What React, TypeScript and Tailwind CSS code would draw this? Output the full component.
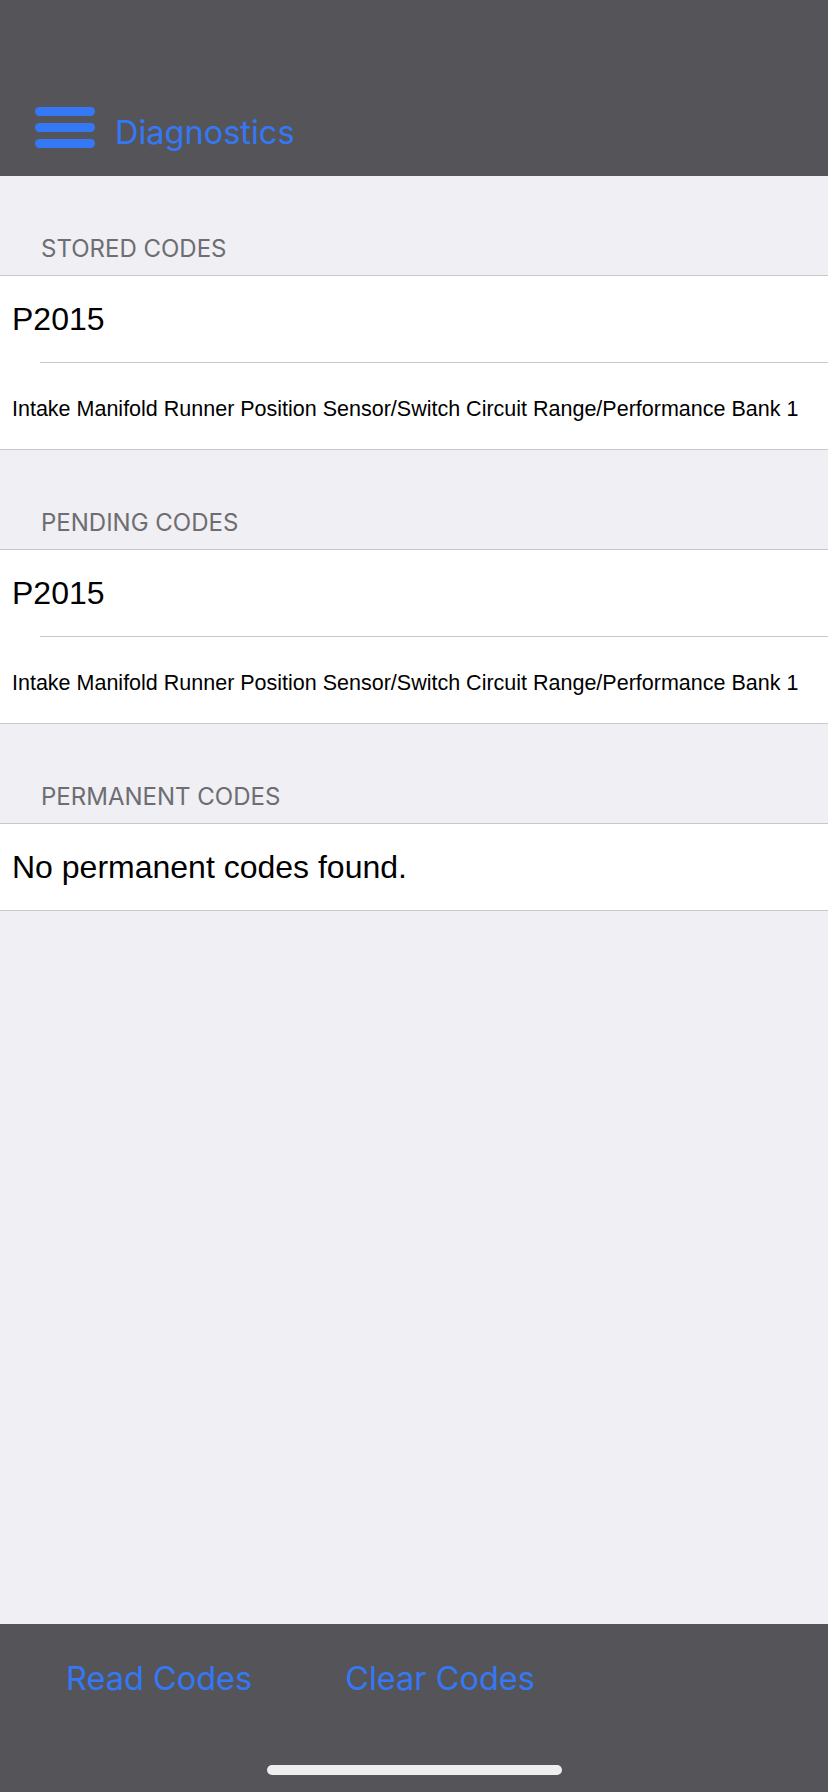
import React from "react";

const sans = { fontFamily: '"Liberation Sans", Arial, sans-serif' };
const ui = { fontFamily: 'Inter, "Noto Sans", sans-serif' };

function SectionHeader({ title }: { title: string }) {
  return (
    <div className="h-[99px] flex items-end pl-[41px] pb-[14px]">
      <span className="text-[24px] leading-none text-[#6d6d72]" style={ui}>
        {title}
      </span>
    </div>
  );
}

function CodeSection({ title, code, desc }: { title: string; code: string; desc: string }) {
  return (
    <div>
      <SectionHeader title={title} />
      <div className="bg-white border-y border-[#c8c7cc]">
        <div className="h-[86px] flex items-center pl-[12px] text-[32px] text-black" style={sans}>
          {code}
        </div>
        <div className="ml-[40px] h-px bg-[#c8c7cc]" />
        <div className="h-[86px] flex items-center pl-[12px] pt-[7px] text-[21.5px] text-black whitespace-nowrap" style={sans}>
          {desc}
        </div>
      </div>
    </div>
  );
}

export default function App() {
  const desc = "Intake Manifold Runner Position Sensor/Switch Circuit Range/Performance Bank 1";
  return (
    <div className="w-[828px] h-[1792px] flex flex-col bg-[#efeff4] overflow-hidden">
      <header className="h-[176px] bg-[#555559] flex items-end pb-[28px] pl-[35px] shrink-0">
        <div className="flex items-end gap-[20px]">
          <div className="flex flex-col gap-[7px] w-[60px]">
            <div className="h-[9px] rounded-full bg-[#3478f6]" />
            <div className="h-[9px] rounded-full bg-[#3478f6]" />
            <div className="h-[9px] rounded-full bg-[#3478f6]" />
          </div>
          <span className="text-[32.5px] leading-none text-[#3478f6] mb-[-1px]" style={ui}>
            Diagnostics
          </span>
        </div>
      </header>
      <main className="flex-1">
        <CodeSection title="STORED CODES" code="P2015" desc={desc} />
        <CodeSection title="PENDING CODES" code="P2015" desc={desc} />
        <div>
          <SectionHeader title="PERMANENT CODES" />
          <div className="bg-white border-y border-[#c8c7cc]">
            <div className="h-[86px] flex items-center pl-[12px] text-[32px] text-black" style={sans}>
              No permanent codes found.
            </div>
          </div>
        </div>
      </main>
      <footer className="h-[168px] bg-[#555559] shrink-0 flex flex-col">
        <div className="flex items-center h-[110px] pl-[66px] gap-[93px]">
          <span className="text-[32.5px] leading-none text-[#3478f6]" style={ui}>Read Codes</span>
          <span className="text-[32.5px] leading-none text-[#3478f6]" style={ui}>Clear Codes</span>
        </div>
        <div className="flex-1 flex justify-center">
          <div className="mt-[31px] w-[295px] h-[10px] rounded-full bg-[#eeeeee]" />
        </div>
      </footer>
    </div>
  );
}
